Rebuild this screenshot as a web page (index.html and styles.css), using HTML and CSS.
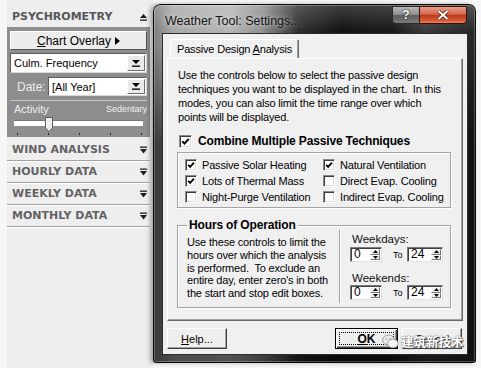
FILE: index.html
```html
<!DOCTYPE html>
<html lang="en">
<head>
  <meta charset="UTF-8" />
  <title>Weather Tool: Settings...</title>
  <link rel="stylesheet" href="styles.css">
</head>
<body>
  <div class="screen">

    <!-- Left tool panel -->
    <aside class="panel">
      <div class="panel-head">
        <span>PSYCHROMETRY</span>
        <svg class="fold" width="7" height="8" viewBox="0 0 7 8"><polygon points="0,5 3.5,1 7,5" /><rect x="0" y="6.5" width="7" height="1.3" /></svg>
      </div>
      <div class="panel-box">
        <div class="overlay-btn">
          <span><u>C</u>hart Overlay</span>
          <svg width="5" height="8" viewBox="0 0 5 8"><polygon points="0,0 5,4 0,8" /></svg>
        </div>
        <div class="combo">
          <span class="combo-text">Culm. Frequency</span>
          <span class="combo-btn"><svg width="8" height="7" viewBox="0 0 8 7"><polygon points="0,0 8,0 4,4" /><rect x="0" y="5.5" width="8" height="1.3" /></svg></span>
        </div>
        <div class="date-row">
          <label>Date:</label>
          <div class="combo">
            <span class="combo-text">[All Year]</span>
            <span class="combo-btn"><svg width="8" height="7" viewBox="0 0 8 7"><polygon points="0,0 8,0 4,4" /><rect x="0" y="5.5" width="8" height="1.3" /></svg></span>
          </div>
        </div>
        <div class="activity">
          <div class="activity-labels"><span>Activity</span><span class="sedentary">Sedentary</span></div>
          <div class="track">
            <svg class="thumb" width="8" height="15" viewBox="0 0 8 15"><path d="M0.5 0.5 H7.5 V11 L4 14.5 L0.5 11 Z" fill="#ececec" stroke="#5a5a5a" /><path d="M1.5 1.5 V10.5" stroke="#fff" /></svg>
          </div>
          <div class="ticks"><i></i><i></i><i></i><i></i><i></i></div>
        </div>
      </div>
      <div class="panel-row first">
        <span>WIND ANALYSIS</span>
        <svg class="fold" width="7" height="8" viewBox="0 0 7 8"><rect x="0" y="0.5" width="7" height="1.3" /><polygon points="0,3 7,3 3.5,7.5" /></svg>
      </div>
      <div class="panel-row">
        <span>HOURLY DATA</span>
        <svg class="fold" width="7" height="8" viewBox="0 0 7 8"><rect x="0" y="0.5" width="7" height="1.3" /><polygon points="0,3 7,3 3.5,7.5" /></svg>
      </div>
      <div class="panel-row">
        <span>WEEKLY DATA</span>
        <svg class="fold" width="7" height="8" viewBox="0 0 7 8"><rect x="0" y="0.5" width="7" height="1.3" /><polygon points="0,3 7,3 3.5,7.5" /></svg>
      </div>
      <div class="panel-row">
        <span>MONTHLY DATA</span>
        <svg class="fold" width="7" height="8" viewBox="0 0 7 8"><rect x="0" y="0.5" width="7" height="1.3" /><polygon points="0,3 7,3 3.5,7.5" /></svg>
      </div>
    </aside>

    <!-- Settings dialog -->
    <section class="dialog">
      <div class="titlebar">
        <span class="title">Weather Tool: Settings...</span>
        <div class="caption-btns">
          <span class="cap-help">?</span>
          <span class="cap-close"><svg width="12" height="10" viewBox="0 0 12 10"><path d="M1.5 1 L10.5 9 M10.5 1 L1.5 9" stroke="#5a1a0c" stroke-width="3.4" /><path d="M1.5 1 L10.5 9 M10.5 1 L1.5 9" stroke="#fff" stroke-width="2" /></svg></span>
        </div>
      </div>

      <div class="client">
        <div class="tabs">
          <div class="tab">Passive Design <u>A</u>nalysis</div>
        </div>

        <div class="tab-panel">
          <p class="intro">Use the controls below to select the passive design<br>techniques you want to be displayed in the chart.&nbsp; In this<br>modes, you can also limit the time range over which<br>points will be displayed.</p>

          <div class="check main-check">
            <span class="box big"><svg width="9" height="9" viewBox="0 0 9 9"><polyline points="1.3,4.3 3.5,6.6 7.8,1.8" /></svg></span>
            <span>Combine Multiple Passive Techniques</span>
          </div>

          <div class="group techniques">
            <div class="check"><span class="box"><svg width="8" height="8" viewBox="0 0 9 9"><polyline points="1.3,4.3 3.5,6.6 7.8,1.8" /></svg></span><span>Passive Solar Heating</span></div>
            <div class="check"><span class="box"><svg width="8" height="8" viewBox="0 0 9 9"><polyline points="1.3,4.3 3.5,6.6 7.8,1.8" /></svg></span><span>Natural Ventilation</span></div>
            <div class="check"><span class="box"><svg width="8" height="8" viewBox="0 0 9 9"><polyline points="1.3,4.3 3.5,6.6 7.8,1.8" /></svg></span><span>Lots of Thermal Mass</span></div>
            <div class="check"><span class="box"></span><span>Direct Evap. Cooling</span></div>
            <div class="check"><span class="box"></span><span>Night-Purge Ventilation</span></div>
            <div class="check"><span class="box"></span><span>Indirect Evap. Cooling</span></div>
          </div>

          <fieldset class="group hours">
            <legend>Hours of Operation</legend>
            <div class="hours-body">
              <p class="hours-text">Use these controls to limit the<br>hours over which the analysis<br>is performed.&nbsp; To exclude an<br>entire day, enter zero's in both<br>the start and stop edit boxes.</p>
              <div class="vsep"></div>
              <div class="ranges">
                <div class="range-label">Weekdays:</div>
                <div class="range-row">
                  <div class="spin"><span class="spin-val">0</span><span class="spin-btns"><span><svg width="5" height="3" viewBox="0 0 5 3"><polygon points="0,3 5,3 2.5,0" /></svg></span><span><svg width="5" height="3" viewBox="0 0 5 3"><polygon points="0,0 5,0 2.5,3" /></svg></span></span></div>
                  <span class="to">To</span>
                  <div class="spin wide"><span class="spin-val">24</span><span class="spin-btns"><span><svg width="5" height="3" viewBox="0 0 5 3"><polygon points="0,3 5,3 2.5,0" /></svg></span><span><svg width="5" height="3" viewBox="0 0 5 3"><polygon points="0,0 5,0 2.5,3" /></svg></span></span></div>
                </div>
                <div class="range-label second">Weekends:</div>
                <div class="range-row tight">
                  <div class="spin"><span class="spin-val">0</span><span class="spin-btns"><span><svg width="5" height="3" viewBox="0 0 5 3"><polygon points="0,3 5,3 2.5,0" /></svg></span><span><svg width="5" height="3" viewBox="0 0 5 3"><polygon points="0,0 5,0 2.5,3" /></svg></span></span></div>
                  <span class="to">To</span>
                  <div class="spin wide"><span class="spin-val">24</span><span class="spin-btns"><span><svg width="5" height="3" viewBox="0 0 5 3"><polygon points="0,3 5,3 2.5,0" /></svg></span><span><svg width="5" height="3" viewBox="0 0 5 3"><polygon points="0,0 5,0 2.5,3" /></svg></span></span></div>
                </div>
              </div>
            </div>
          </fieldset>
        </div>

        <div class="actions">
          <button class="btn"><u>H</u>elp...</button>
          <span class="spacer"></span>
          <button class="btn default"><span class="focus"><u>O</u>K</span></button>
          <button class="btn">Cancel</button>
        </div>
      </div>
    </section>

    <!-- watermark over the dialog corner -->
    <div class="watermark">
      <svg width="17" height="15" viewBox="0 0 17 15">
        <ellipse cx="6.5" cy="6" rx="6" ry="5" fill="#e9e9e9" stroke="#8a8a8a" stroke-width="0.8" />
        <ellipse cx="11" cy="9.5" rx="5.3" ry="4.4" fill="#f7f7f7" stroke="#8a8a8a" stroke-width="0.8" />
        <circle cx="4.5" cy="5" r="0.8" fill="#8a8a8a" /><circle cx="8.3" cy="5" r="0.8" fill="#8a8a8a" />
      </svg>
      <span>建筑新技术</span>
    </div>
  </div>
</body>
</html>
```

FILE: styles.css
```css
* { box-sizing: border-box; }

html, body {
  margin: 0; padding: 0;
}
body {
  width: 481px; height: 368px;
  overflow: hidden;
  background: #f7f7f7;
  font-family: "Liberation Sans", Arial, sans-serif;
  font-size: 11px;
  color: #000;
}
.screen {
  position: relative;
  display: flex;
  align-items: flex-start;
  height: 368px;
}

/* ---------- Left panel ---------- */
.panel {
  width: 146px;
  height: 368px;
  margin-left: 7px;
  background: #efeeef;
}
.panel-head, .panel-row {
  display: flex;
  align-items: center;
  justify-content: space-between;
  margin-right: 3px;
  padding: 0 3px 0 5px;
  font-family: "DejaVu Sans", sans-serif;
  font-weight: bold;
  font-size: 11px;
  color: #636363;
}
.panel-head {
  height: 27px;
  padding-top: 6px;
  color: #575757;
}
.fold { fill: #1e1e1e; }
.panel-row {
  height: 22px;
  border-bottom: 1px solid #a2a2a2;
  box-shadow: 0 1px 0 #fff;
}
.panel-row.first { margin-top: 2px; }

.panel-box {
  height: 110px;
  margin-right: 3px;
  padding: 4px 3px 0 3px;
  background: #8e8e8e;
}
.overlay-btn {
  height: 19px;
  display: flex;
  align-items: center;
  justify-content: center;
  gap: 4px;
  font-size: 12px;
  background: #ececec;
  border: 1px solid;
  border-color: #fff #555 #555 #fff;
}
.combo {
  height: 20px;
  margin-top: 3px;
  display: flex;
  align-items: stretch;
  background: #fff;
  border: 1px solid;
  border-color: #5c5c5c #d8d8d8 #d8d8d8 #5c5c5c;
}
.combo-text {
  flex: 1;
  padding-left: 3px;
  line-height: 18px;
  font-size: 11px;
}
.combo-btn {
  width: 18px;
  margin: 1px;
  display: flex;
  align-items: center;
  justify-content: center;
  background: #eaeaea;
  border: 1px solid;
  border-color: #fff #707070 #707070 #fff;
}
.date-row {
  height: 19px;
  margin-top: 4px;
  display: flex;
  align-items: center;
}
.date-row label {
  width: 38px;
  padding-left: 7px;
  font-size: 12px;
  color: #ececec;
}
.date-row .combo {
  flex: 1;
  height: 19px;
  margin-top: 0;
}
.activity {
  margin-top: 4px;
  border-top: 1px solid #c4c4c4;
}
.activity-labels {
  height: 14px;
  display: flex;
  align-items: center;
  justify-content: space-between;
  padding: 0 0 0 4px;
  margin-top: 1px;
  color: #eeeeee;
  font-size: 11px;
}
.sedentary { font-size: 9px; }
.track {
  height: 6px;
  margin: 4px 4px 0 4px;
  display: flex;
  align-items: flex-start;
  background: #fff;
  border-top: 1px solid #777;
}
.thumb {
  flex: none;
  margin: -4px 0 0 31px;
}
.ticks {
  display: flex;
  justify-content: space-between;
  padding: 0 5px 0 7px;
  margin-top: 7px;
}
.ticks i {
  width: 1px;
  height: 2px;
  background: #222;
}

/* ---------- Dialog ---------- */
.dialog {
  width: 323px;
  height: 359px;
  margin-top: 4px;
  display: flex;
  flex-direction: column;
  padding: 0 8px 8px 9px;
  border-radius: 7px 7px 3px 3px;
  background:
    linear-gradient(180deg, rgba(255,255,255,0.2) 0, rgba(255,255,255,0) 28px),
    linear-gradient(180deg, rgba(0,0,0,0) 0, rgba(0,0,0,0) 40px, rgba(0,0,0,0.55) 140px),
    linear-gradient(90deg, #7a7a7a 0, #a8a8a8 6%, #b5b5b5 24%, #8e8e8e 34%, #2e2e2e 45%, #121212 58%, #181818 74%, #3a3a3a 84%, #262626 100%);
  box-shadow: -3px 0 4px rgba(0,0,0,0.3), inset 0 0 0 1px #090909, inset 0 0 0 2px rgba(255,255,255,0.25);
}
.titlebar {
  height: 29px;
  flex: none;
  display: flex;
  align-items: flex-start;
  justify-content: space-between;
}
.title {
  margin: 10px 0 0 3px;
  line-height: 15px;
  font-size: 12.5px;
  color: #141414;
  text-shadow: 0 0 5px rgba(255,255,255,0.8);
}
.caption-btns {
  display: flex;
  margin: 2px 1px 0 0;
  height: 18px;
}
.cap-help, .cap-close {
  display: flex;
  align-items: center;
  justify-content: center;
  border: 1px solid #2a2a2a;
}
.cap-help {
  width: 27px;
  border-radius: 0 0 0 4px;
  border-right: none;
  background: linear-gradient(180deg, #b9b9b9 0, #8d8d8d 48%, #5d5d5d 52%, #7a7a7a 100%);
  color: #fff;
  font-weight: bold;
  font-size: 12px;
  text-shadow: 0 0 2px #222, 0 0 1px #000;
}
.cap-close {
  width: 48px;
  border-radius: 0 0 4px 0;
  border-color: #3e0e05;
  background: linear-gradient(180deg, #e7a08d 0, #d2664a 45%, #c1391b 52%, #d35a34 85%, #e38a62 100%);
}

.client {
  flex: 1;
  display: flex;
  flex-direction: column;
  background: #f0f0f0;
  border: 1px solid #2c2c2c;
}
.tabs {
  display: flex;
  padding: 5px 0 0 7px;
  height: 24px;
}
.tab {
  height: 19px;
  padding: 0 6px;
  line-height: 18px;
  letter-spacing: -0.18px;
  border: 1px solid;
  border-color: #fff #6a6a6a transparent #fff;
  border-bottom: none;
  box-shadow: inset -1px 0 0 #a0a0a0;
  border-radius: 2px 2px 0 0;
  position: relative;
  z-index: 1;
}
.tab-panel {
  height: 263px;
  margin: 0 4px;
  padding: 9px 11px 0 9px;
  border: 1px solid;
  border-color: #fff #6a6a6a #6a6a6a #fff;
  box-shadow: inset -1px -1px 0 #a0a0a0;
  letter-spacing: -0.18px;
}
.intro {
  margin: 0 0 0 1px;
  line-height: 14px;
  white-space: nowrap;
}
.check {
  display: flex;
  align-items: center;
  gap: 5px;
  height: 16px;
  white-space: nowrap;
}
.box {
  width: 12px;
  height: 12px;
  flex: none;
  display: flex;
  align-items: center;
  justify-content: center;
  background: #fff;
  border: 1px solid;
  border-color: #8a8a8a #fff #fff #8a8a8a;
  box-shadow: inset 1px 1px 0 #3c3c3c, inset -1px -1px 0 #dcdcdc;
}
.box.big {
  width: 13px;
  height: 13px;
}
.box polyline {
  fill: none;
  stroke: #000;
  stroke-width: 2;
}
.main-check {
  margin: 10px 0 0 2px;
  height: 14px;
  gap: 6px;
  font-weight: bold;
  font-size: 12px;
  letter-spacing: -0.15px;
}
.group {
  border: 1px solid #a3a3a3;
  box-shadow: inset 1px 1px 0 #fff, 1px 1px 0 #fff;
}
.techniques {
  height: 56px;
  margin-top: 4px;
  padding: 4px 0 0 7px;
  display: grid;
  grid-template-columns: 138px 1fr;
  grid-auto-rows: 16px;
}
.hours {
  margin: 10px 0 0 0;
  padding: 0 0 3px 9px;
  min-width: 0;
  height: 90px;
}
.hours legend {
  padding: 0 2px;
  font-weight: bold;
  font-size: 12px;
  letter-spacing: -0.15px;
  line-height: 14px;
}
.hours-body {
  display: flex;
  align-items: flex-start;
}
.hours-text {
  width: 146px;
  margin: 4px 0 0 0;
  line-height: 12.8px;
  white-space: nowrap;
}
.vsep {
  width: 2px;
  height: 73px;
  margin: -2px 9px 0 6px;
  border-left: 1px solid #a3a3a3;
  border-right: 1px solid #fff;
}
.ranges {
  display: flex;
  flex-direction: column;
  padding-top: 1px;
  letter-spacing: 0;
}
.range-label {
  line-height: 12px;
  padding-left: 2px;
  font-size: 11.5px;
  color: #111;
}
.range-label.second { margin-top: 10px; }
.range-row {
  display: flex;
  align-items: center;
  margin-top: 2px;
}
.range-row.tight { margin-top: 1px; }
.spin {
  width: 32px;
  height: 15px;
  display: flex;
  background: #fff;
  border: 1px solid;
  border-color: #7a7a7a #e0e0e0 #e0e0e0 #7a7a7a;
  box-shadow: inset 1px 1px 0 #404040;
}
.spin.wide { width: 36px; }
.spin-val {
  flex: 1;
  padding-left: 3px;
  line-height: 13px;
  font-size: 12px;
}
.spin-btns {
  width: 10px;
  display: flex;
  flex-direction: column;
  margin: 1px 1px 1px 0;
}
.spin-btns span {
  flex: 1;
  display: flex;
  align-items: center;
  justify-content: center;
  background: #ececec;
  border: 1px solid;
  border-color: #fff #777 #777 #fff;
}
.spin-btns svg { fill: #000; }
.to {
  width: 10px;
  margin: 0 4px 0 11px;
  font-size: 9px;
}

/* bottom buttons */
.actions {
  display: flex;
  margin: 7px 5px 5px 4px;
  height: 21px;
}
.spacer { flex: 1; }
.btn {
  width: 60px;
  height: 21px;
  padding: 0;
  margin: 0;
  font-family: "Liberation Sans", Arial, sans-serif;
  font-size: 11px;
  color: #000;
  background: #efefef;
  border: 1px solid;
  border-color: #fff #404040 #404040 #fff;
  box-shadow: inset -1px -1px 0 #a0a0a0;
}
.btn.default {
  width: 63px;
  margin-right: 4px;
  padding: 3px;
  border: 1px solid #000;
  box-shadow: inset 1px 1px 0 #fff, inset -1px -1px 0 #404040, inset -2px -2px 0 #a0a0a0;
  font-weight: bold;
  font-size: 12px;
}
.focus {
  display: flex;
  align-items: center;
  justify-content: center;
  height: 100%;
  border: 1px dotted #000;
}

/* watermark */
.watermark {
  position: absolute;
  left: 382px;
  top: 332px;
  display: flex;
  align-items: center;
  gap: 2px;
  font-family: "Noto Sans CJK SC", sans-serif;
  font-weight: bold;
  font-size: 12.5px;
  color: #fff;
  text-shadow: 0 0 2px #555, 1px 1px 1px #444;
}
```
